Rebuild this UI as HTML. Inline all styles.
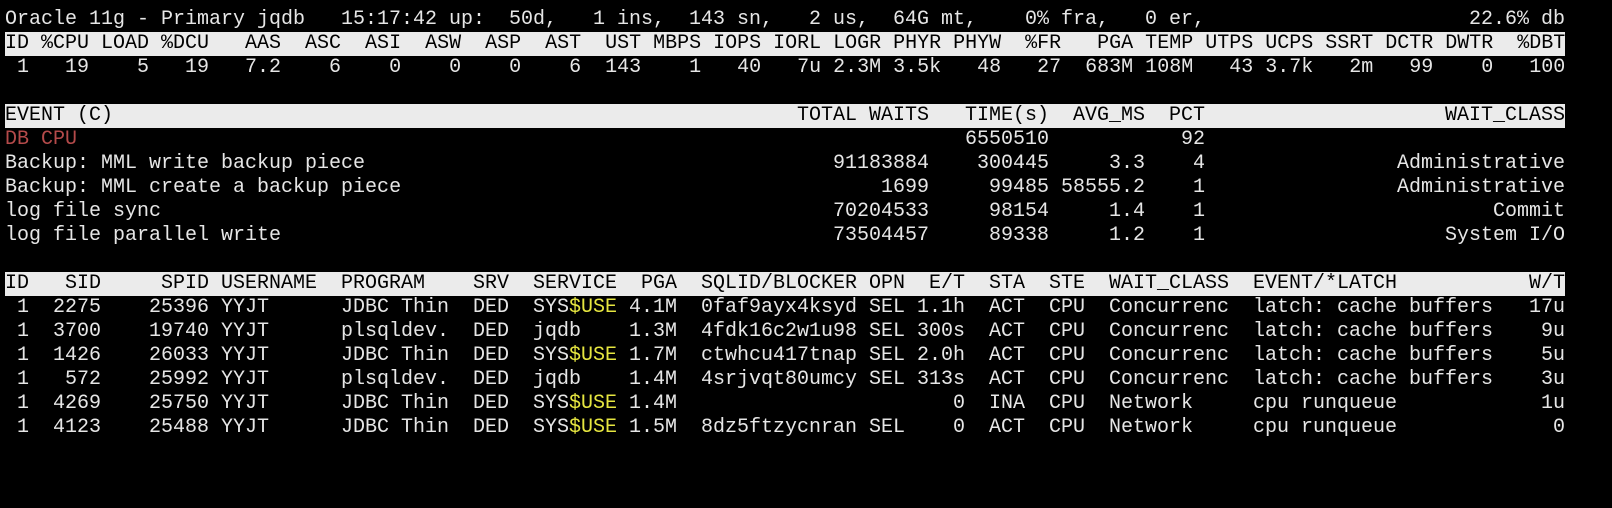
<!DOCTYPE html>
<html><head><meta charset="utf-8"><style>
html,body{margin:0;padding:0;background:#000;}
body{width:1612px;height:508px;position:relative;overflow:hidden;font-family:"Liberation Mono","DejaVu Sans Mono",monospace;font-size:20px;color:#e6e6e6;}
.row{position:absolute;left:0;width:1612px;height:24px;line-height:24px;}
.band{position:absolute;left:5px;width:1560px;height:24px;background:#ebebeb;}
.row span{position:absolute;top:0;white-space:pre;}
.bk{color:#000;}
.red{color:#b44a4a;}
.y{color:#e6e640;}
pre{margin:0;font:inherit;position:absolute;left:5px;top:0;line-height:24px;}
</style></head><body>

<div class="row" style="top:8px">
<span style="left:5px">Oracle 11g - Primary jqdb</span>
<span style="left:341px">15:17:42</span>
<span style="left:449px">up:</span>
<span style="left:509px">50d,</span>
<span style="left:593px">1 ins,</span>
<span style="left:689px">143 sn,</span>
<span style="left:809px">2 us,</span>
<span style="left:893px">64G mt,</span>
<span style="left:1025px">0% fra,</span>
<span style="left:1145px">0 er,</span>
<span style="left:1469px">22.6% db</span>
</div>

<div class="band" style="top:32px"></div>
<div class="row bk" style="top:32px"><pre>ID %CPU LOAD %DCU   AAS  ASC  ASI  ASW  ASP  AST  UST MBPS IOPS IORL LOGR PHYR PHYW  %FR   PGA TEMP UTPS UCPS SSRT DCTR DWTR  %DBT</pre></div>
<div class="row" style="top:56px"><pre> 1   19    5   19   7.2    6    0    0    0    6  143    1   40   7u 2.3M 3.5k   48   27  683M 108M   43 3.7k   2m   99    0   100</pre></div>

<div class="band" style="top:104px"></div>
<div class="row bk" style="top:104px">
<span style="left:5px">EVENT (C)</span>
<span style="left:797px">TOTAL WAITS</span>
<span style="left:965px">TIME(s)</span>
<span style="left:1073px">AVG_MS</span>
<span style="left:1169px">PCT</span>
<span style="left:1445px">WAIT_CLASS</span>
</div>
<div class="row" style="top:128px">
<span class="red" style="left:5px">DB CPU</span>
<span style="left:965px">6550510</span>
<span style="left:1181px">92</span>
</div>
<div class="row" style="top:152px">
<span style="left:5px">Backup: MML write backup piece</span>
<span style="left:833px">91183884</span>
<span style="left:977px">300445</span>
<span style="left:1109px">3.3</span>
<span style="left:1193px">4</span>
<span style="left:1397px">Administrative</span>
</div>
<div class="row" style="top:176px">
<span style="left:5px">Backup: MML create a backup piece</span>
<span style="left:881px">1699</span>
<span style="left:989px">99485</span>
<span style="left:1061px">58555.2</span>
<span style="left:1193px">1</span>
<span style="left:1397px">Administrative</span>
</div>
<div class="row" style="top:200px">
<span style="left:5px">log file sync</span>
<span style="left:833px">70204533</span>
<span style="left:989px">98154</span>
<span style="left:1109px">1.4</span>
<span style="left:1193px">1</span>
<span style="left:1493px">Commit</span>
</div>
<div class="row" style="top:224px">
<span style="left:5px">log file parallel write</span>
<span style="left:833px">73504457</span>
<span style="left:989px">89338</span>
<span style="left:1109px">1.2</span>
<span style="left:1193px">1</span>
<span style="left:1445px">System I/O</span>
</div>

<div class="band" style="top:272px"></div>
<div class="row bk" style="top:272px">
<span style="left:5px">ID</span>
<span style="left:65px">SID</span>
<span style="left:161px">SPID</span>
<span style="left:221px">USERNAME</span>
<span style="left:341px">PROGRAM</span>
<span style="left:473px">SRV</span>
<span style="left:533px">SERVICE</span>
<span style="left:641px">PGA</span>
<span style="left:701px">SQLID/BLOCKER</span>
<span style="left:869px">OPN</span>
<span style="left:929px">E/T</span>
<span style="left:989px">STA</span>
<span style="left:1049px">STE</span>
<span style="left:1109px">WAIT_CLASS</span>
<span style="left:1253px">EVENT/*LATCH</span>
<span style="left:1529px">W/T</span>
</div>

<div class="row" style="top:296px">
<span style="left:17px">1</span><span style="left:53px">2275</span><span style="left:149px">25396</span><span style="left:221px">YYJT</span><span style="left:341px">JDBC Thin</span><span style="left:473px">DED</span><span style="left:533px">SYS<span class="y" style="position:static">$USE</span></span><span style="left:629px">4.1M</span><span style="left:701px">0faf9ayx4ksyd</span><span style="left:869px">SEL</span><span style="left:917px">1.1h</span><span style="left:989px">ACT</span><span style="left:1049px">CPU</span><span style="left:1109px">Concurrenc</span><span style="left:1253px">latch: cache buffers</span><span style="left:1529px">17u</span>
</div>
<div class="row" style="top:320px">
<span style="left:17px">1</span><span style="left:53px">3700</span><span style="left:149px">19740</span><span style="left:221px">YYJT</span><span style="left:341px">plsqldev.</span><span style="left:473px">DED</span><span style="left:533px">jqdb</span><span style="left:629px">1.3M</span><span style="left:701px">4fdk16c2w1u98</span><span style="left:869px">SEL</span><span style="left:917px">300s</span><span style="left:989px">ACT</span><span style="left:1049px">CPU</span><span style="left:1109px">Concurrenc</span><span style="left:1253px">latch: cache buffers</span><span style="left:1541px">9u</span>
</div>
<div class="row" style="top:344px">
<span style="left:17px">1</span><span style="left:53px">1426</span><span style="left:149px">26033</span><span style="left:221px">YYJT</span><span style="left:341px">JDBC Thin</span><span style="left:473px">DED</span><span style="left:533px">SYS<span class="y" style="position:static">$USE</span></span><span style="left:629px">1.7M</span><span style="left:701px">ctwhcu417tnap</span><span style="left:869px">SEL</span><span style="left:917px">2.0h</span><span style="left:989px">ACT</span><span style="left:1049px">CPU</span><span style="left:1109px">Concurrenc</span><span style="left:1253px">latch: cache buffers</span><span style="left:1541px">5u</span>
</div>
<div class="row" style="top:368px">
<span style="left:17px">1</span><span style="left:65px">572</span><span style="left:149px">25992</span><span style="left:221px">YYJT</span><span style="left:341px">plsqldev.</span><span style="left:473px">DED</span><span style="left:533px">jqdb</span><span style="left:629px">1.4M</span><span style="left:701px">4srjvqt80umcy</span><span style="left:869px">SEL</span><span style="left:917px">313s</span><span style="left:989px">ACT</span><span style="left:1049px">CPU</span><span style="left:1109px">Concurrenc</span><span style="left:1253px">latch: cache buffers</span><span style="left:1541px">3u</span>
</div>
<div class="row" style="top:392px">
<span style="left:17px">1</span><span style="left:53px">4269</span><span style="left:149px">25750</span><span style="left:221px">YYJT</span><span style="left:341px">JDBC Thin</span><span style="left:473px">DED</span><span style="left:533px">SYS<span class="y" style="position:static">$USE</span></span><span style="left:629px">1.4M</span><span style="left:953px">0</span><span style="left:989px">INA</span><span style="left:1049px">CPU</span><span style="left:1109px">Network</span><span style="left:1253px">cpu runqueue</span><span style="left:1541px">1u</span>
</div>
<div class="row" style="top:416px">
<span style="left:17px">1</span><span style="left:53px">4123</span><span style="left:149px">25488</span><span style="left:221px">YYJT</span><span style="left:341px">JDBC Thin</span><span style="left:473px">DED</span><span style="left:533px">SYS<span class="y" style="position:static">$USE</span></span><span style="left:629px">1.5M</span><span style="left:701px">8dz5ftzycnran</span><span style="left:869px">SEL</span><span style="left:953px">0</span><span style="left:989px">ACT</span><span style="left:1049px">CPU</span><span style="left:1109px">Network</span><span style="left:1253px">cpu runqueue</span><span style="left:1553px">0</span>
</div>

</body></html>
